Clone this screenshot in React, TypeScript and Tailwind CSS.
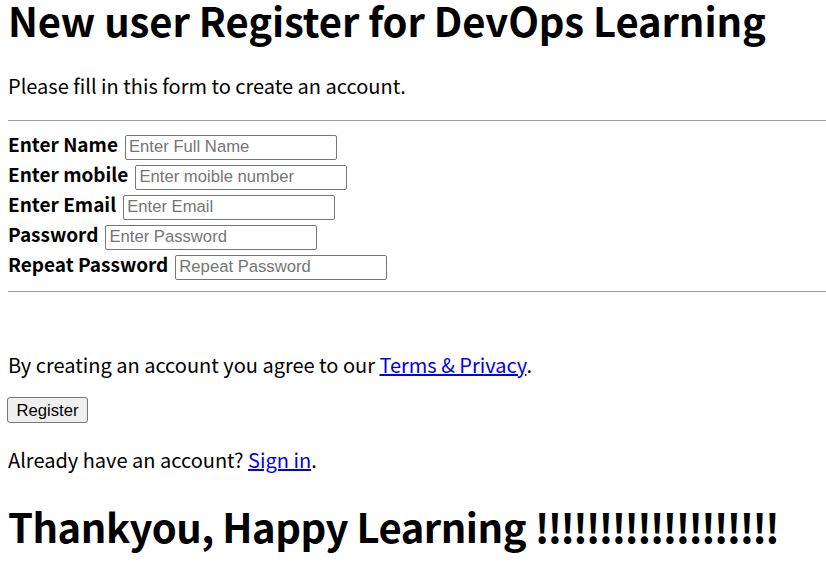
import React from "react";

const fields = [
  { label: "Enter Name", ph: "Enter Full Name" },
  { label: "Enter mobile", ph: "Enter moible number" },
  { label: "Enter Email", ph: "Enter Email" },
  { label: "Password", ph: "Enter Password" },
  { label: "Repeat Password", ph: "Repeat Password" },
];

export default function App() {
  return (
    <div className="min-h-[570px] bg-white pl-[8px] text-black font-['Noto_Sans_CJK_KR','Noto_Sans',sans-serif]">
      <h1 className="text-[40px] font-bold leading-[40px] tracking-[-0.1px]">
        New user Register for DevOps Learning
      </h1>
      <p className="mt-[34px] text-[20px] leading-[24px]">Please fill in this form to create an account.</p>
      <div className="mt-[22px] border-t border-[#9a9a9a]" />
      <div className="mt-[13px] flex flex-col">
        {fields.map((f) => (
          <div key={f.label} className="flex h-[30px] items-baseline gap-[7px]">
            <span className="text-[19px] font-bold leading-[20px]">{f.label}</span>
            <input
              placeholder={f.ph}
              className="h-[25px] w-[212px] rounded-[2px] border border-[#767676] px-[3px] font-['Liberation_Sans',Arial,sans-serif] text-[16.67px] placeholder:text-[#757575]"
            />
          </div>
        ))}
      </div>
      <div className="mt-[7px] border-t border-[#9a9a9a]" />
      <p className="mt-[61px] text-[20px] leading-[24px]">
        By creating an account you agree to our{" "}
        <a href="#" className="text-[#0000ee] underline">
          Terms &amp; Privacy
        </a>
        .
      </p>
      <button className="mt-[20px] -ml-[1px] flex h-[26px] w-[81px] items-center justify-center rounded-[3px] border border-[#767676] bg-[#efefef] font-['Liberation_Sans',Arial,sans-serif] text-[16.67px]">
        Register
      </button>
      <p className="mt-[25px] text-[20px] leading-[24px]">
        Already have an account?{" "}
        <a href="#" className="text-[#0000ee] underline">
          Sign in
        </a>
        .
      </p>
      <h1 className="mt-[34px] whitespace-nowrap text-[40px] font-bold leading-[40px] tracking-[-0.5px]">
        Thankyou, Happy Learning <span className="tracking-[-2px]">!!!!!!!!!!!!!!!!!!!</span>
      </h1>
    </div>
  );
}
